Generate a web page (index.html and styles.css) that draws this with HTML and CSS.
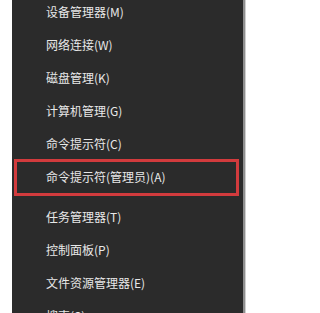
FILE: index.html
```html
<!DOCTYPE html>
<html lang="zh-CN">
<head>
<meta charset="utf-8">
<link rel="stylesheet" href="styles.css">
</head>
<body>
<div class="stage">
  <ul class="menu">
    <li class="item">设备管理器(M)</li>
    <li class="item">网络连接(W)</li>
    <li class="item">磁盘管理(K)</li>
    <li class="item">计算机管理(G)</li>
    <li class="item">命令提示符(C)</li>
    <li class="item highlighted">命令提示符(管理员)(A)<span class="mark"></span></li>
    <li class="sep"></li>
    <li class="item">任务管理器(T)</li>
    <li class="item">控制面板(P)</li>
    <li class="item">文件资源管理器(E)</li>
    <li class="item">搜索(S)</li>
  </ul>
</div>
</body>
</html>
```
FILE: styles.css
```css
html, body {
  margin: 0;
  padding: 0;
  background: #ffffff;
  overflow: hidden;
  height: 313px;
}
.stage {
  display: flex;
  padding-left: 12px;
}
.menu {
  list-style: none;
  margin: -5px 0 0 0;
  padding: 0;
  width: 231px;
  background: #2b2b2b;
  border-right: 2px solid #8f8f8f;
  box-shadow: 1px 0 0 #d0d0d0;
  font-family: "Noto Sans CJK SC", "Microsoft YaHei", sans-serif;
  font-size: 12px;
  color: #e8e8e8;
}
.item {
  height: 33px;
  line-height: 33px;
  padding-left: 34px;
  white-space: nowrap;
  position: relative;
}
.sep {
  height: 7px;
}
.mark {
  position: absolute;
  left: 2px;
  top: -1px;
  width: 225px;
  height: 37px;
  box-sizing: border-box;
  border: 3px solid #d23b3d;
}
```
